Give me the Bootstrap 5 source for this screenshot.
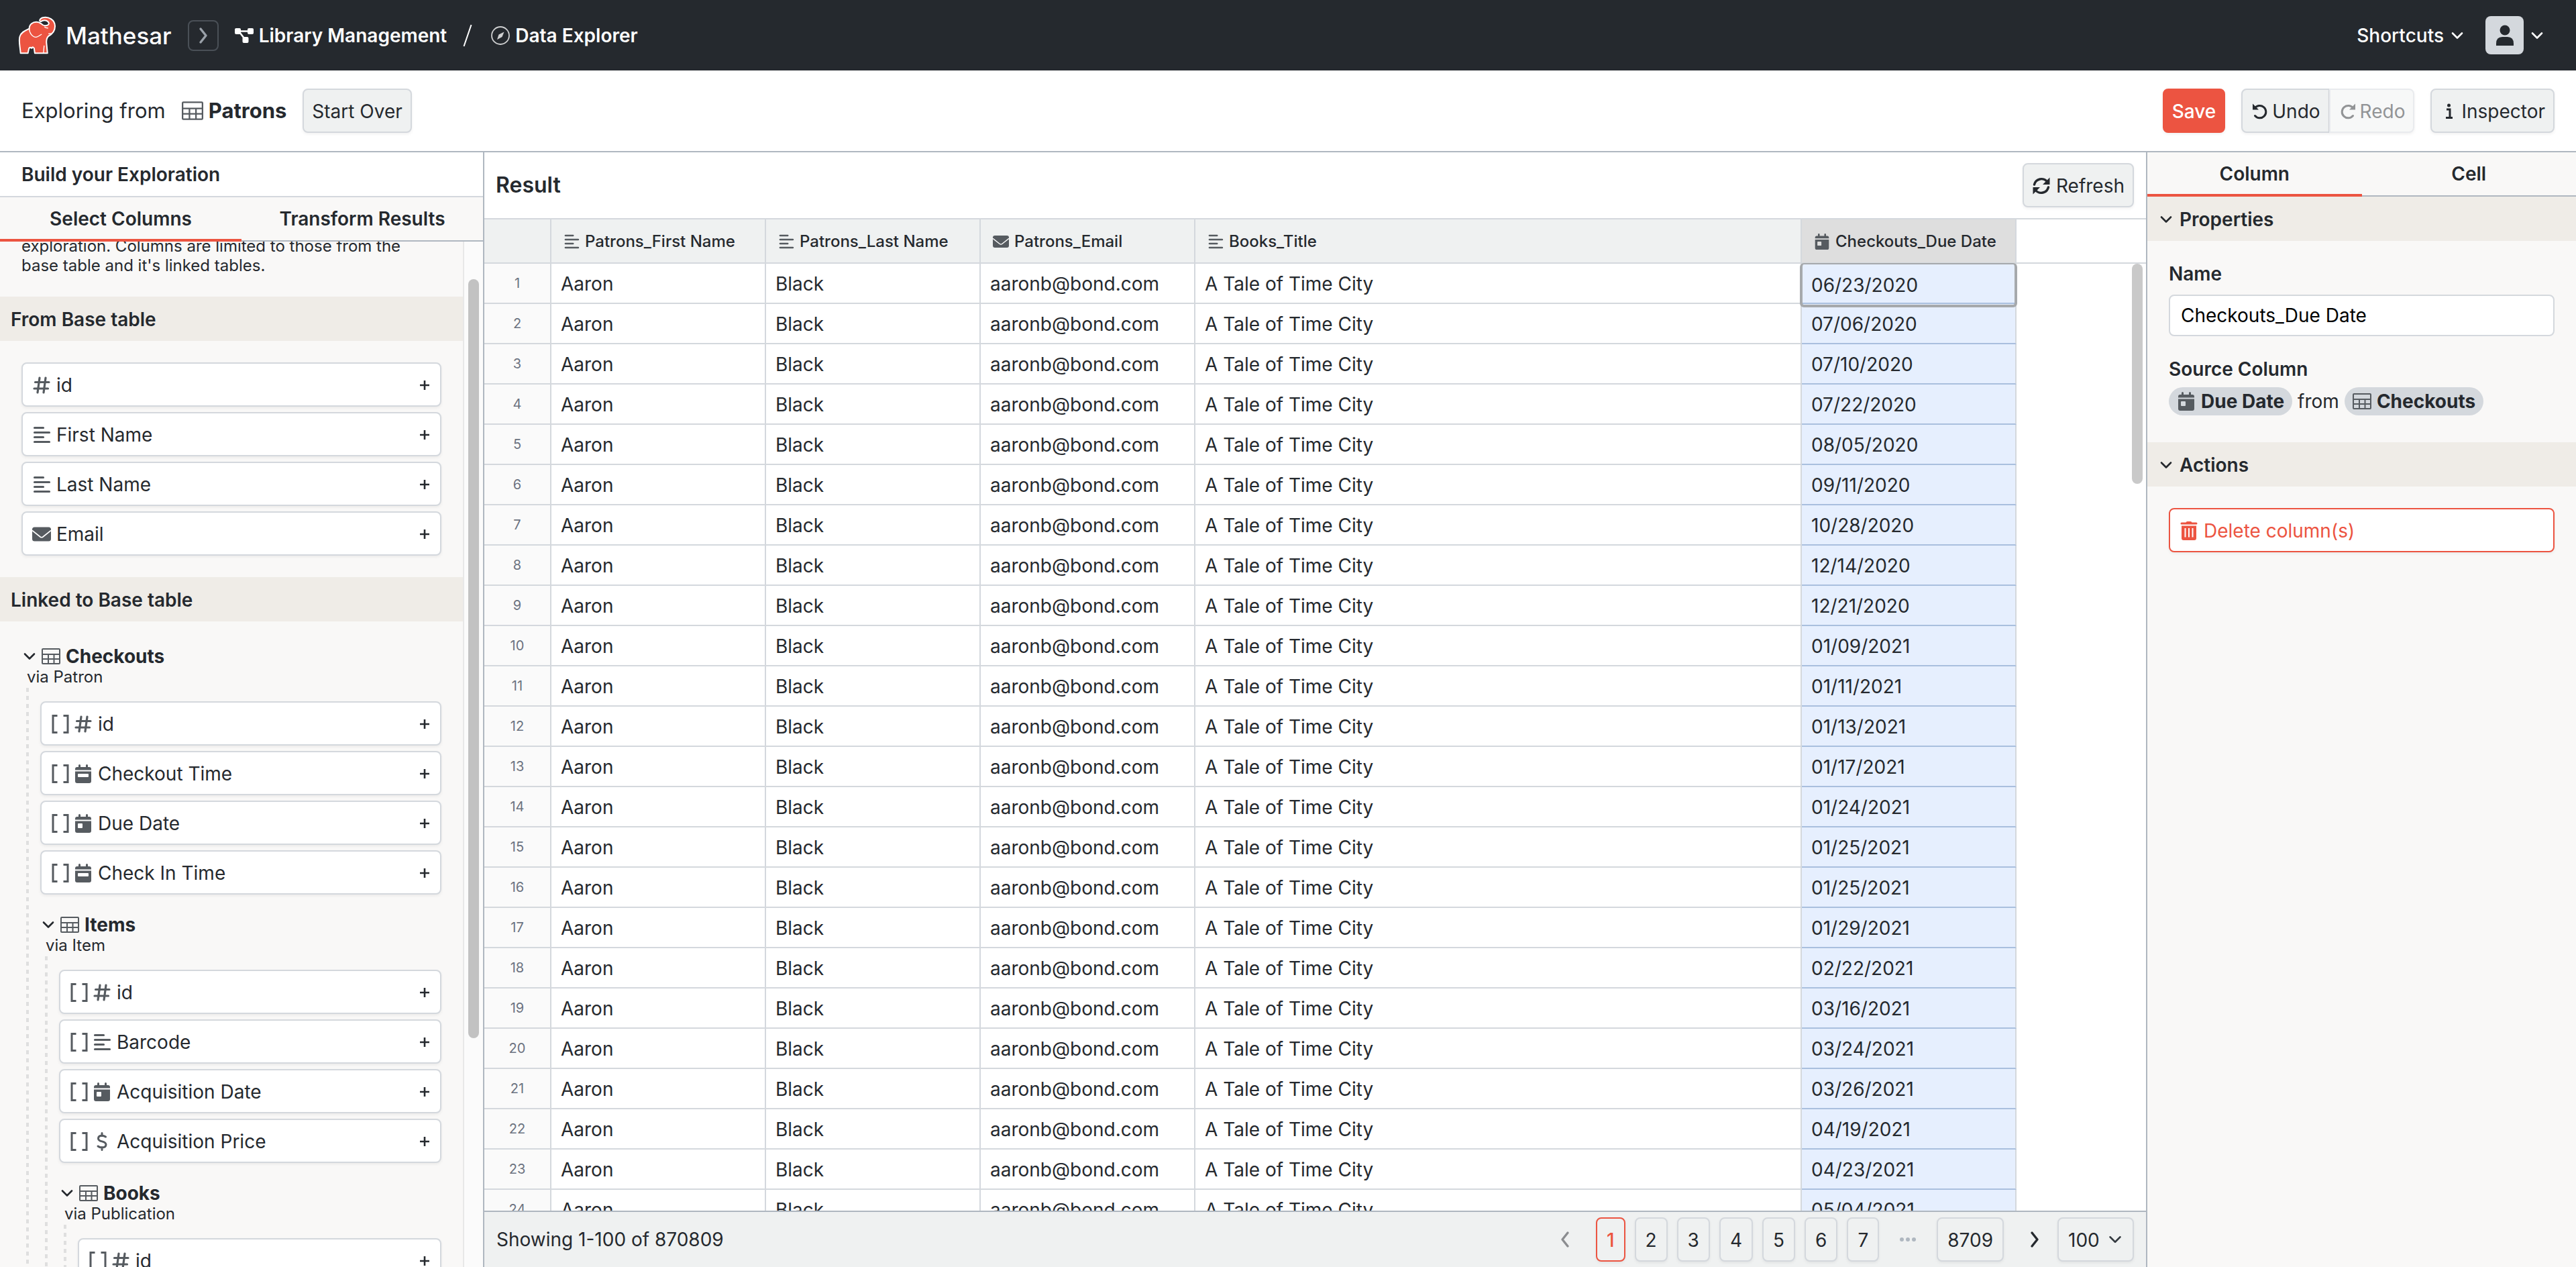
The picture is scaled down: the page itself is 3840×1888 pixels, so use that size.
<!DOCTYPE html>
<html lang="en">
<head>
<meta charset="utf-8">
<meta name="viewport" content="width=device-width, initial-scale=1">
<title>Data Explorer - Mathesar</title>
<link rel="stylesheet" href="https://cdn.jsdelivr.net/npm/bootstrap@5.3.0/dist/css/bootstrap.min.css">
<style>
:root{--ink:#25292e;--line:#d4d8dd;--edge:#afb7c0;--brand:#ec5441;--sand:#efece7;--pale:#f9f8f7;--mist:#eff1f1}
body{font-family:Inter,"Liberation Sans",sans-serif;font-size:28px;line-height:42px;color:var(--ink);background:#fff}
h1,h2,h3{margin:0;font-size:28px;line-height:42px;font-weight:600}
.ic{flex:none;width:28px;height:28px;color:#565b60;display:block}
.chev{flex:none;display:block;width:20px;height:20px;color:inherit}
.topbar{background:var(--ink);height:105px;padding:0 48px 0 27px}
.topbar,.topbar a,.topbar button{color:#fff}
.logo{width:57px;height:58px}
.brandname{font-size:35px;font-weight:500;text-decoration:none;gap:14px}
.topbar .expand-btn{width:46px;height:46px;border:2px solid #4a5057;border-radius:8px;color:#9aa1a9;padding:0}
.crumb{font-weight:600;text-decoration:none;gap:8px}
.crumb .ic{color:#fff}
.crumb .dim{color:#cfd0d1}
.slash{width:14px;height:34px}
.plainbtn{background:none;border:0;padding:0;font-weight:500;gap:10px}
.avatar{width:57px;height:57px;border-radius:8px;background:#d4d8dd;color:var(--ink)}
.toolbar{height:122px;padding:0 32px;border-bottom:2px solid var(--edge)}
.toolbar .origin{font-size:31px}
.toolbar .origin .ic{width:32px;height:32px}
.btn{--bs-btn-font-size:28px;--bs-btn-line-height:42px;--bs-btn-padding-x:12px;--bs-btn-border-width:2px;--bs-btn-border-radius:8px;--bs-btn-color:var(--ink);padding-top:11px;padding-bottom:9px;box-shadow:0 2px 4px rgba(0,0,0,.06)}
.btn-soft{--bs-btn-bg:var(--mist);--bs-btn-border-color:var(--line);--bs-btn-disabled-bg:#f7f8f8;--bs-btn-disabled-border-color:#e9ebee;--bs-btn-disabled-color:#929496;--bs-btn-disabled-opacity:1}
.btn-soft .ic{color:inherit}
.btn-brand{--bs-btn-bg:var(--brand);--bs-btn-border-color:var(--brand);--bs-btn-color:#fff;font-weight:500}
.builder{flex:0 0 722px;border-right:2px solid var(--edge);background:var(--pale)}
.builder-title{background:#fff;height:67px;padding:0 32px;border-bottom:2px solid var(--line)}
.tabs2{--bs-nav-link-color:var(--ink);--bs-nav-link-padding-x:0;--bs-nav-link-padding-y:0;--bs-nav-link-font-weight:600;height:66px;flex:none;background:var(--pale)}
.tabs2 .nav-link{height:66px;line-height:64px;font-weight:600;border-bottom:2px solid var(--edge);border-radius:0}
.tabs2 .nav-link.active{border-bottom:4px solid var(--brand)}
.builder-body{flex:1 1 0;min-height:0;overflow:hidden}
.blurb{font-size:24px;line-height:29px;margin:-8px 32px 32px}
.band{background:var(--sand);height:66px;padding:2px 16px 0}
.stack{padding:32px;gap:8px}
.pick{height:66px;border:2px solid var(--line);border-radius:8px;background:#fff;color:var(--ink);padding:2px 16px 0 14px;gap:6px;box-shadow:0 2px 4px rgba(0,0,0,.06);text-align:left;flex:none}
.pick .plus{width:14px;height:14px}
.group{padding-top:28px}
.group-top{padding-top:35px;margin:0 32px}
.group h3{line-height:34px;font-weight:700;padding-left:2px}
.group .via{font-size:24px;line-height:28px;padding-left:8px;margin-bottom:2px}
.branch{padding:20px 0 0 28px;background:repeating-linear-gradient(#dfdfdf 0 6px,transparent 6px 12px) 7px 0/4px 100% no-repeat}
.branch .stack{padding:0}
.track{flex:0 0 30px;background:#fbfbfb;border-left:2px solid #e8e8e8;padding:56px 6px 0}
.thumb{width:16px;border-radius:8px;background:#c2c2c2}
.track .thumb{height:1131px}
.result{flex:1 1 0;min-width:0}
.result-title{height:98px;flex:none;padding:0 18px 0 17px}
.result-title h2{font-size:32px}
.sheetwrap{flex:1 1 0;min-height:0;overflow:hidden;position:relative;border-top:2px solid var(--line)}
.headline{position:absolute;left:0;right:0;top:64px;height:2px;background:var(--line)}
.sheetwrap .thumb{position:absolute;right:5px;top:66px;height:328px;background:#c9c9c9}
.sheet{table-layout:fixed;border-collapse:separate;border-spacing:0;width:2284px;position:relative}
.sheet th,.sheet td{border-right:2px solid var(--line);border-bottom:2px solid var(--line);height:60px;padding:2px 14px 0;vertical-align:middle;line-height:42px;white-space:nowrap;overflow:hidden}
.sheet thead th{height:66px;background:var(--mist);font-size:24px;font-weight:500;padding:2px 18px 0}
.sheet thead .ic{width:24px;height:24px}
.sheet tbody th{background:#fafafa;color:#6b7280;font-size:20px;font-weight:400;text-align:center;padding:0}
.sheet thead th.picked{background:#dedede}
.sheet td.picked{background:#e6effe;border-bottom-color:#a9bfde}
.sheet td.current{position:relative;overflow:visible;padding-top:5px}
.sheet td.current::after{content:"";position:absolute;inset:-1px -3px -7px;border:4px solid #a6a9ac;border-top-width:2px;border-radius:6px}
.pagerbar{flex:none;height:84px;background:var(--mist);border-top:2px solid var(--edge);padding:0 18px}
.pages{gap:14px}
.pages .btn{--bs-btn-padding-x:14px}
.pages .btn-soft.now{--bs-btn-border-color:var(--brand);--bs-btn-color:var(--brand);font-weight:500}
.arrow{background:none;border:0;padding:0;color:var(--ink)}
.arrow:disabled{color:#8b8d90}
.arrow .ic{color:inherit;width:24px}
.arrow-prev{margin-right:20px}
.arrow-next{margin:0 8px 0 20px}
.pages .form-select{width:114px;height:66px;font-size:28px;line-height:42px;padding:2px 40px 0 14px;border:2px solid var(--line);border-radius:8px;color:var(--ink);background-color:var(--mist);background-position:right 16px center;background-size:20px 20px;box-shadow:0 2px 4px rgba(0,0,0,.06)}
.inspector{flex:0 0 641px;border-left:2px solid var(--edge);background:var(--pale)}
.inspector .band{padding:2px 18px 0;gap:10px}
.inspector .form-control{height:62px;font-size:28px;line-height:42px;padding:0 16px;border:2px solid var(--line);border-radius:8px;color:#000;margin-bottom:32px}
.pane{padding:32px 32px 40px}
.lbl{display:block;font-weight:600;line-height:34px;margin-bottom:14px}
.lbl-close{margin-bottom:10px}
.chip{background:#d4d8dd;height:42px;padding:0 12px;border-radius:21px;font-weight:700;gap:8px}
.btn-erase{--bs-btn-bg:#fff;--bs-btn-border-color:var(--brand);--bs-btn-color:var(--brand);--bs-btn-padding-x:14px}
.btn-erase .ic{color:inherit}
</style>
<script src="https://cdn.jsdelivr.net/npm/bootstrap@5.3.0/dist/js/bootstrap.bundle.min.js"></script>
</head>
<body>
<svg class="d-none" aria-hidden="true">
  <symbol id="down" viewBox="0 0 20 20"><path d="M3 6.500l7 7 7-7" fill="none" stroke="currentColor" stroke-width="2.600" stroke-linecap="round" stroke-linejoin="round"/></symbol>
  <symbol id="right" viewBox="0 0 24 28"><path d="M8 4l8 10-8 10" fill="none" stroke="currentColor" stroke-width="3.400" stroke-linecap="round" stroke-linejoin="round"/></symbol>
  <symbol id="left" viewBox="0 0 24 28"><path d="M16 4L8 14l8 10" fill="none" stroke="currentColor" stroke-width="3.400" stroke-linecap="round" stroke-linejoin="round"/></symbol>
  <symbol id="table" viewBox="0 0 28 28"><g fill="none" stroke="currentColor" stroke-width="2"><rect x="1" y="3" width="26" height="22" rx="1"/><path d="M1 11h26M1 18h26M10 11v14M18.500 11v14"/></g></symbol>
  <symbol id="text" viewBox="0 0 28 28"><path d="M3.500 3.500h13M3.500 10.500h22M3.500 17.500h13M3.500 24.500h22" stroke="currentColor" stroke-width="3.200" stroke-linecap="round"/></symbol>
  <symbol id="hash" viewBox="0 0 28 28"><path d="M4.500 9.500h20.500M3 19h20.500M11 3L8 25M20 3l-3 22" stroke="currentColor" stroke-width="3.200" stroke-linecap="round"/></symbol>
  <symbol id="mail" viewBox="0 0 28 28"><rect y="3.500" width="28" height="21" rx="3.500" fill="currentColor"/><path d="M0 8.500L12 18q2 1.500 4 0L28 8.500" fill="none" stroke="#fff" stroke-width="1.600"/></symbol>
  <symbol id="day" viewBox="0 0 28 28"><path fill="currentColor" fill-rule="evenodd" d="M7 1.500Q7 0 8.500 0T10 1.500V4h8V1.500Q18 0 19.500 0T21 1.500V4h2q3 0 3 3v1.500H2V7q0-3 3-3h2zM2 10.500h24V25q0 3-3 3H5q-3 0-3-3zM7 14q-1 0-1 1v5q0 1 1 1h5q1 0 1-1v-5q0-1-1-1z"/></symbol>
  <symbol id="stamp" viewBox="0 0 28 28"><path fill="currentColor" fill-rule="evenodd" d="M7 1.500Q7 0 8.500 0T10 1.500V4h8V1.500Q18 0 19.500 0T21 1.500V4h2q3 0 3 3v1.500H2V7q0-3 3-3h2zM2 10.500h24V25q0 3-3 3H5q-3 0-3-3zM7 14q-1 0-1 1v3q0 1 1 1h14q1 0 1-1v-3q0-1-1-1z"/></symbol>
  <symbol id="list" viewBox="0 0 28 28"><path d="M9.500 1.500H3v25h6.500M18.500 1.500H25v25h-6.500" fill="none" stroke="currentColor" stroke-width="3"/></symbol>
  <symbol id="money" viewBox="0 0 28 28"><path d="M14 1.500v4M14 22.500v4M19.500 7q-2.500-1.800-5.500-1.800c-3.600 0-5.500 1.600-5.500 4.200 0 6 11.500 3 11.500 9.200 0 2.800-2.500 4.400-6 4.400q-3.500 0-6-2" fill="none" stroke="currentColor" stroke-width="3" stroke-linecap="round"/></symbol>
  <symbol id="plus" viewBox="0 0 14 14"><path d="M7 0v14M0 7h14" stroke="currentColor" stroke-width="2.600"/></symbol>
  <symbol id="undo" viewBox="0 0 28 28"><path d="M6 9.500A9.200 9.200 0 1 1 6.500 20.500" fill="none" stroke="currentColor" stroke-width="3" stroke-linecap="round"/><path d="M3 2.500v9h9z" fill="currentColor"/></symbol>
  <symbol id="redo" viewBox="0 0 28 28"><path d="M22 9.500A9.200 9.200 0 1 0 21.500 20.500" fill="none" stroke="currentColor" stroke-width="3" stroke-linecap="round"/><path d="M25 2.500v9h-9z" fill="currentColor"/></symbol>
  <symbol id="sync" viewBox="0 0 28 28"><path d="M3.500 12A11 11 0 0 1 22.500 7.500M24.500 16A11 11 0 0 1 5.500 20.500" fill="none" stroke="currentColor" stroke-width="3.400" stroke-linecap="round"/><path d="M26.500 1.500V12H16zM1.500 26.500V16H12z" fill="currentColor"/></symbol>
  <symbol id="info" viewBox="0 0 28 28"><circle cx="13.500" cy="5" r="2.500" fill="currentColor"/><path d="M10 11h5v12M9 23.500h10" fill="none" stroke="currentColor" stroke-width="3"/></symbol>
  <symbol id="trash" viewBox="0 0 28 28"><path fill="currentColor" fill-rule="evenodd" d="M9.500 1.500Q10 0 11.500 0h5Q18 0 18.500 1.500H25q1.500 0 1.500 1.500T25 4.500H3Q1.500 4.500 1.500 3T3 1.500zM3 6.500h22V25q0 3-3 3H6q-3 0-3-3zM7.500 10v13.500h2V10zM13 10v13.500h2V10zM18.500 10v13.500h2V10z"/></symbol>
  <symbol id="schema" viewBox="0 0 28 28"><g fill="currentColor"><rect y="3" width="9" height="9" rx="2"/><rect x="19" y="3" width="9" height="9" rx="2"/><rect x="11.500" y="16" width="9" height="9" rx="2"/></g><path d="M8 7.500h12M7 9l7 9" stroke="currentColor" stroke-width="2.600"/></symbol>
  <symbol id="compass" viewBox="0 0 28 28"><circle cx="14" cy="14" r="13" fill="none" stroke="currentColor" stroke-width="1.800"/><path d="M19.500 8.500l-3 7.500-7.500 4 2.500-7.500z" fill="currentColor"/></symbol>
</svg>

<div class="vh-100 d-flex flex-column overflow-hidden">
  <header class="topbar d-flex align-items-center flex-shrink-0">
    <a href="#" class="brandname d-flex align-items-center">
      <svg class="logo" viewBox="22 24 172 174" aria-hidden="true"><path d="M33 190C31 160 23 132 30 114c7-20 26-26 42-34C72 60 88 49 106 50c8 0 14 3 19 7 8 8 20 12 30 7 10-6 4-16-6-20-9-3-17-1-25 4-8-2-6-12 6-17 28-9 58 9 58 38 0 24-14 37-30 45-8 8-10 18-8 34l4 42H97l-3-22q-8-10-10 0-8-6-13 0l-5 22z" fill="#ec5441" stroke="#fff" stroke-width="6" stroke-linejoin="round"/><path d="M72 78c0 22 14 40 30 40 10 0 18-8 26-13M140 72q8 6 17 5M158 103l14-1M136 190l3-34" fill="none" stroke="#fff" stroke-width="4"/></svg>
      <span>Mathesar</span>
    </a>
    <button type="button" class="expand-btn bg-transparent d-flex align-items-center justify-content-center ms-4" aria-label="Expand"><svg class="ic text-reset"><use href="#right"/></svg></button>
    <a href="#" class="crumb d-flex align-items-center ms-4"><svg class="ic"><use href="#schema"/></svg>Library Management</a>
    <svg class="slash mx-4" viewBox="0 0 14 34" aria-hidden="true"><path d="M12.500 1L1.500 33" stroke="#fff" stroke-width="2"/></svg>
    <a href="#" class="crumb d-flex align-items-center ms-1"><svg class="ic dim"><use href="#compass"/></svg>Data Explorer</a>
    <button type="button" class="plainbtn d-flex align-items-center ms-auto">Shortcuts<svg class="chev"><use href="#down"/></svg></button>
    <button type="button" class="plainbtn d-flex align-items-center ms-4" aria-label="Account">
      <span class="avatar d-flex align-items-center justify-content-center ms-2"><svg width="26" height="36" viewBox="0 0 26 36"><circle cx="13" cy="10" r="7.500" fill="currentColor"/><path d="M0 33v-3q0-10 9-10h8q9 0 9 10v3z" fill="currentColor"/></svg></span>
      <svg class="chev"><use href="#down"/></svg>
    </button>
  </header>

  <div class="toolbar d-flex align-items-center flex-shrink-0">
    <span class="origin">Exploring from</span>
    <h1 class="origin d-flex align-items-center gap-2 fw-bold ms-4"><svg class="ic"><use href="#table"/></svg>Patrons</h1>
    <button type="button" class="btn btn-soft ms-4">Start Over</button>
    <div class="d-flex gap-4 ms-auto">
      <button type="button" class="btn btn-brand">Save</button>
      <div class="btn-group">
        <button type="button" class="btn btn-soft d-flex align-items-center gap-1"><svg class="ic"><use href="#undo"/></svg>Undo</button>
        <button type="button" class="btn btn-soft d-flex align-items-center gap-1" disabled><svg class="ic"><use href="#redo"/></svg>Redo</button>
      </div>
      <button type="button" class="btn btn-soft d-flex align-items-center gap-1"><svg class="ic"><use href="#info"/></svg>Inspector</button>
    </div>
  </div>

  <div class="d-flex flex-grow-1" style="min-height:0">
    <aside class="builder d-flex flex-column">
      <div class="builder-title d-flex align-items-center flex-shrink-0"><h2>Build your Exploration</h2></div>
      <ul class="nav nav-justified flex-nowrap tabs2">
        <li class="nav-item"><a class="nav-link active" aria-current="page" href="#">Select Columns</a></li>
        <li class="nav-item"><a class="nav-link" href="#">Transform Results</a></li>
      </ul>
      <div class="builder-body d-flex">
        <div class="flex-grow-1">
          <p class="blurb">exploration. Columns are limited to those from the<br>base table and it's linked tables.</p>
          <div class="band d-flex align-items-center"><h2>From Base table</h2></div>
          <div class="stack d-flex flex-column" data-cols="hash:id|text:First Name|text:Last Name|mail:Email"></div>
          <div class="band d-flex align-items-center"><h2>Linked to Base table</h2></div>
          <section class="group group-top">
            <h3 class="d-flex align-items-center gap-2"><svg class="chev"><use href="#down"/></svg><svg class="ic"><use href="#table"/></svg>Checkouts</h3>
            <div class="via">via Patron</div>
            <div class="branch">
              <div class="stack d-flex flex-column" data-multi data-cols="hash:id|stamp:Checkout Time|day:Due Date|stamp:Check In Time"></div>
              <section class="group">
                <h3 class="d-flex align-items-center gap-2"><svg class="chev"><use href="#down"/></svg><svg class="ic"><use href="#table"/></svg>Items</h3>
                <div class="via">via Item</div>
                <div class="branch">
                  <div class="stack d-flex flex-column" data-multi data-cols="hash:id|text:Barcode|day:Acquisition Date|money:Acquisition Price"></div>
                  <section class="group">
                    <h3 class="d-flex align-items-center gap-2"><svg class="chev"><use href="#down"/></svg><svg class="ic"><use href="#table"/></svg>Books</h3>
                    <div class="via">via Publication</div>
                    <div class="branch">
                      <div class="stack d-flex flex-column" data-multi data-cols="hash:id"></div>
                    </div>
                  </section>
                </div>
              </section>
            </div>
          </section>
        </div>
        <div class="track" aria-hidden="true"><div class="thumb"></div></div>
      </div>
    </aside>

    <main class="result d-flex flex-column">
      <div class="result-title d-flex align-items-center justify-content-between">
        <h2>Result</h2>
        <button type="button" class="btn btn-soft d-flex align-items-center gap-2"><svg class="ic"><use href="#sync"/></svg>Refresh</button>
      </div>
      <div class="sheetwrap">
        <div class="headline"></div>
        <table class="sheet">
          <colgroup><col style="width:100px"><col style="width:320px"><col style="width:320px"><col style="width:320px"><col style="width:904px"><col style="width:320px"></colgroup>
          <thead><tr>
            <th aria-label="Row"></th>
            <th scope="col"><div class="d-flex align-items-center gap-2"><svg class="ic"><use href="#text"/></svg>Patrons_First Name</div></th>
            <th scope="col"><div class="d-flex align-items-center gap-2"><svg class="ic"><use href="#text"/></svg>Patrons_Last Name</div></th>
            <th scope="col"><div class="d-flex align-items-center gap-2"><svg class="ic"><use href="#mail"/></svg>Patrons_Email</div></th>
            <th scope="col"><div class="d-flex align-items-center gap-2"><svg class="ic"><use href="#text"/></svg>Books_Title</div></th>
            <th scope="col" class="picked"><div class="d-flex align-items-center gap-2"><svg class="ic"><use href="#day"/></svg>Checkouts_Due Date</div></th>
          </tr></thead>
          <tbody id="rows"></tbody>
        </table>
        <div class="thumb" aria-hidden="true"></div>
      </div>
      <footer class="pagerbar d-flex align-items-center justify-content-between">
        <span>Showing 1-100 of 870809</span>
        <nav class="pages d-flex align-items-center" aria-label="Pages">
          <button type="button" class="arrow arrow-prev" aria-label="Previous" disabled><svg class="ic"><use href="#left"/></svg></button>
          <button type="button" class="btn btn-soft now">1</button>
          <button type="button" class="btn btn-soft">2</button>
          <button type="button" class="btn btn-soft">3</button>
          <button type="button" class="btn btn-soft">4</button>
          <button type="button" class="btn btn-soft">5</button>
          <button type="button" class="btn btn-soft">6</button>
          <button type="button" class="btn btn-soft">7</button>
          <svg class="mx-3" width="26" height="8" viewBox="0 0 26 8" aria-hidden="true"><g fill="#afb7c0"><circle cx="4" cy="4" r="3"/><circle cx="13" cy="4" r="3"/><circle cx="22" cy="4" r="3"/></g></svg>
          <button type="button" class="btn btn-soft">8709</button>
          <button type="button" class="arrow arrow-next" aria-label="Next"><svg class="ic"><use href="#right"/></svg></button>
          <select class="form-select" aria-label="Page size"><option>100</option></select>
        </nav>
      </footer>
    </main>

    <aside class="inspector d-flex flex-column">
      <ul class="nav nav-justified flex-nowrap tabs2">
        <li class="nav-item"><a class="nav-link active" aria-current="page" href="#">Column</a></li>
        <li class="nav-item"><a class="nav-link" href="#">Cell</a></li>
      </ul>
      <div class="band d-flex align-items-center"><svg class="chev"><use href="#down"/></svg><h2>Properties</h2></div>
      <div class="pane">
        <label class="lbl" for="colname">Name</label>
        <input id="colname" class="form-control" type="text" value="Checkouts_Due Date">
        <div class="lbl lbl-close">Source Column</div>
        <div class="d-flex align-items-center gap-2">
          <span class="chip d-flex align-items-center"><svg class="ic"><use href="#day"/></svg>Due Date</span>from
          <span class="chip d-flex align-items-center"><svg class="ic"><use href="#table"/></svg>Checkouts</span>
        </div>
      </div>
      <div class="band d-flex align-items-center"><svg class="chev"><use href="#down"/></svg><h2>Actions</h2></div>
      <div class="pane">
        <button type="button" class="btn btn-erase w-100 d-flex align-items-center gap-2"><svg class="ic"><use href="#trash"/></svg>Delete column(s)</button>
      </div>
    </aside>
  </div>
</div>

<script>
const icon = name => `<svg class="ic" aria-hidden="true"><use href="#${name}"/></svg>`;
document.querySelectorAll('[data-cols]').forEach(box => {
  box.innerHTML = box.dataset.cols.split('|').map(entry => {
    const [kind, label] = entry.split(':');
    const lead = 'multi' in box.dataset ? icon('list') : '';
    return `<button type="button" class="pick d-flex align-items-center">${lead}<span class="d-flex align-items-center gap-2">${icon(kind)}${label}</span><svg class="plus ms-auto"><use href="#plus"/></svg></button>`;
  }).join('');
});
const due = ['06/23/2020','07/06/2020','07/10/2020','07/22/2020','08/05/2020','09/11/2020','10/28/2020','12/14/2020','12/21/2020','01/09/2021','01/11/2021','01/13/2021','01/17/2021','01/24/2021','01/25/2021','01/25/2021','01/29/2021','02/22/2021','03/16/2021','03/24/2021','03/26/2021','04/19/2021','04/23/2021','05/04/2021'];
document.getElementById('rows').innerHTML = due.map((d, i) =>
  `<tr><th scope="row">${i + 1}</th><td>Aaron</td><td>Black</td><td>aaronb@bond.com</td><td>A Tale of Time City</td><td class="picked${i ? '' : ' current'}">${d}</td></tr>`).join('');
</script>
</body>
</html>
